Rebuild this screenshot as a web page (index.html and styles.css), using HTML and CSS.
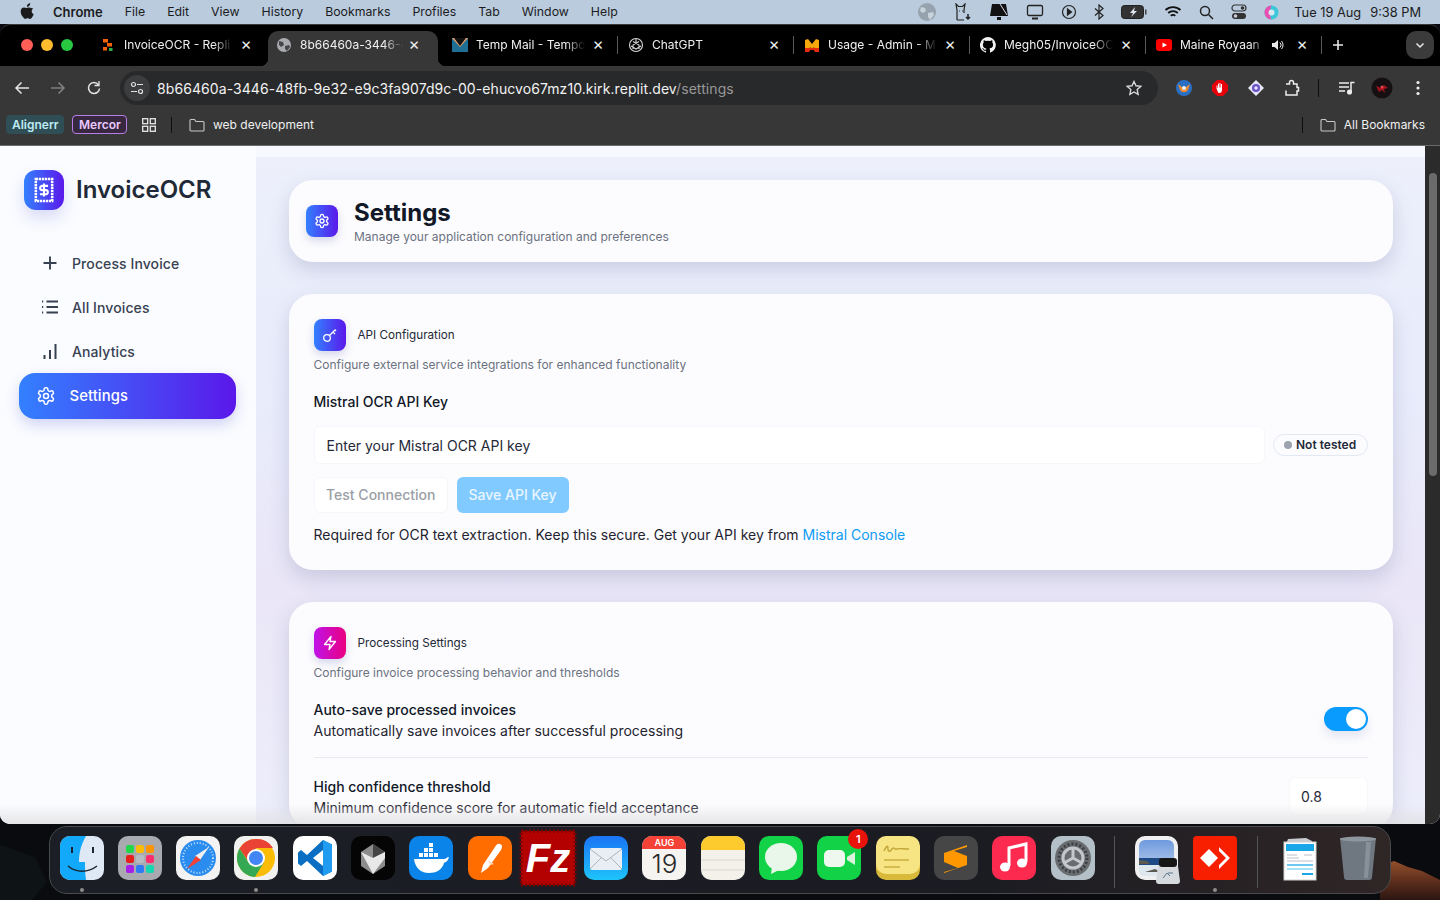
FILE: index.html
```html
<!DOCTYPE html>
<html lang="en">
<head>
    <meta charset="UTF-8">
    <meta name="viewport" content="width=device-width, initial-scale=1.0">
    <title>Settings - InvoiceOCR</title>
    <link rel="stylesheet" href="styles.css">
</head>
<body>
<div class="desktop">
    <svg class="wallpaper" width="1440" height="900" viewBox="0 0 1440 900">
        <defs><linearGradient id="rockg" x1="0" y1="0" x2="0" y2="1"><stop offset="0" stop-color="#93502b"/><stop offset=".5" stop-color="#5e2f1c"/><stop offset="1" stop-color="#2c1611"/></linearGradient></defs>
        <path d="M1380 866l14-5 14 6 14 4 18 9v20h-60z" fill="url(#rockg)"/>
        <path d="M0 845l35 12 12 25-15 18H0z" fill="#0e1315"/>
    </svg>

    <!-- barra de menu -->
    <header class="menubar">
        <svg class="apple" width="14" height="16" viewBox="0 0 14 16"><path d="M10.2 0c.1 1.100-.3 2-.9 2.700-.6.700-1.500 1.200-2.400 1.100-.1-1 .4-2 .9-2.600C8.400.6 9.400.1 10.200 0zM13.300 5.500c-1 .7-1.600 1.600-1.600 2.800 0 1.400.8 2.400 2 2.900-.4 1.100-.9 2.100-1.600 3-.6.900-1.300 1.700-2.200 1.700-.9 0-1.200-.6-2.300-.6-1.100 0-1.500.6-2.300.6-.9 0-1.600-.9-2.300-1.800C1.800 12.800.7 10.500.7 8.400c0-2.400 1.500-3.900 3.300-3.900.9 0 1.700.6 2.400.6.600 0 1.500-.7 2.700-.7 1.500.1 3 .9 4.200 1.100z" fill="#1b1b1b"/></svg>
        <nav class="menu-items">
            <b>Chrome</b><span>File</span><span>Edit</span><span>View</span><span>History</span><span>Bookmarks</span><span>Profiles</span><span>Tab</span><span>Window</span><span>Help</span>
        </nav>
        <div class="status-items">
            <svg width="20" height="20" viewBox="0 0 20 20"><circle cx="10" cy="10" r="9" fill="#96a3ae"/><path d="M4 5l4 1 1 3-3 2-3-2zM11 11l5-1 1 3-4 5-2-3z" fill="#c8d3dc"/></svg>
            <svg width="18" height="18" viewBox="0 0 18 18" fill="none" stroke="#222" stroke-width="1.200"><path d="M3 17V7L2 1l2.500 2.500h4L11 1l-1 6v3"/><path d="M3 17h7M5 8h.8M8 8h.8"/><path d="M14 11v5M12 14l2 2 2-2" stroke-width="1.500"/></svg>
            <svg width="20" height="18" viewBox="0 0 20 18"><path d="M3 1h14l2 12H1z" fill="#111"/><path d="M11 1l7 11" stroke="#dde" stroke-width="1"/><rect x="8" y="14" width="4" height="3" fill="#111"/></svg>
            <svg width="18" height="16" viewBox="0 0 18 16" fill="none" stroke="#222" stroke-width="1.300"><rect x="1.500" y="1.500" width="15" height="10" rx="1.500"/><path d="M6 14.500h6" stroke-width="2"/></svg>
            <svg width="16" height="16" viewBox="0 0 16 16" fill="none" stroke="#222" stroke-width="1.200"><circle cx="8" cy="8" r="6.500"/><path d="M6.500 5l4 3-4 3z" fill="#222"/></svg>
            <svg width="10" height="16" viewBox="0 0 10 16" fill="none" stroke="#222" stroke-width="1.200"><path d="M1 4.500l8 7L5 15V1l4 3.500-8 7"/></svg>
            <svg width="26" height="14" viewBox="0 0 26 14"><rect x=".5" y=".5" width="22" height="13" rx="3" fill="#333" stroke="#222"/><path d="M14 2l-5 6h3l-2 4 6-6h-3z" fill="#dfe6ee"/><rect x="24" y="4.500" width="1.500" height="5" fill="#444"/></svg>
            <svg width="18" height="14" viewBox="0 0 18 14" fill="none" stroke="#111" stroke-width="1.800"><path d="M1.500 5a11 11 0 0115 0M4.200 8a7 7 0 019.600 0M6.800 10.800a3 3 0 014.400 0"/></svg>
            <svg width="15" height="15" viewBox="0 0 15 15" fill="none" stroke="#222" stroke-width="1.500"><circle cx="6" cy="6" r="4.500"/><path d="M9.500 9.500L14 14"/></svg>
            <svg width="16" height="16" viewBox="0 0 16 16"><rect x="1" y="1" width="14" height="6" rx="3" fill="none" stroke="#333" stroke-width="1.200"/><circle cx="11.500" cy="4" r="1.800" fill="#333"/><rect x="1" y="9" width="14" height="6" rx="3" fill="#333"/><circle cx="4.500" cy="12" r="1.800" fill="#ccd"/></svg>
            <svg width="15" height="15" viewBox="0 0 15 15"><circle cx="7.500" cy="7.500" r="7" fill="#3cc8d8"/><path d="M7.500.5a7 7 0 000 14c-2-3-2-10 0-14z" fill="#e84fb0"/><circle cx="7.500" cy="7.500" r="3" fill="#dbe8f2"/></svg>
            <div class="clock"><span>Tue 19 Aug</span><span>9:38 PM</span></div>
        </div>
    </header>

    <!-- ventana del navegador -->
    <div class="window">
        <div class="tabstrip">
            <div class="traffic">
                <i class="red"></i><i class="yellow"></i><i class="green"></i>
            </div>
            <div class="tab">
                <svg class="favicon" viewBox="0 0 16 16"><rect x="3" y="2" width="5" height="3.500" fill="#f26207"/><rect x="7" y="6" width="5" height="3.500" fill="#f26207"/><rect x="3" y="10" width="4" height="3.500" fill="#f26207"/><rect x="9" y="11" width="3.500" height="3" fill="#2bb24c"/></svg>
                <span class="tab-title">InvoiceOCR - Repli</span><span class="tab-close">×</span>
            </div>
            <div class="tab active">
                <svg class="favicon" viewBox="0 0 16 16"><circle cx="8" cy="8" r="7" fill="#a9abae"/><path d="M3 4l4 1 1 3-3 2-2-2zM9 9l4-1 1 2-3 4-2-2z" fill="#454648"/></svg>
                <span class="tab-title short">8b66460a-3446-4</span><span class="tab-close">×</span>
            </div>
            <div class="tab">
                <svg class="favicon" viewBox="0 0 16 16"><rect y="1" width="16" height="14" fill="#1e6f93"/><path d="M0 1h16L8 10z" fill="#f5a66b"/><path d="M2 1l6 8 6-8z" fill="#111"/></svg>
                <span class="tab-title">Temp Mail - Tempo</span><span class="tab-close">×</span>
            </div>
            <div class="tab sep">
                <svg class="favicon" viewBox="0 0 16 16" fill="none" stroke="#d8d8d8" stroke-width="1.100"><circle cx="8" cy="8" r="6.500"/><path d="M5 4.500l6 3.500v4M11 4.500L5 8v4M3 9l5 3 5-3M8 2v4"/></svg>
                <span class="tab-title">ChatGPT</span><span class="tab-close">×</span>
            </div>
            <div class="tab sep">
                <svg class="favicon" viewBox="0 0 16 16"><path d="M1 15V3l3-1 4 5 4-5 3 1v12h-4l-1-5-2 3-2-3-1 5z" fill="#f5a70b"/><path d="M1 15v-4h14v4h-4l-1-2H6l-1 2z" fill="#e32b10"/></svg>
                <span class="tab-title">Usage - Admin - M</span><span class="tab-close">×</span>
            </div>
            <div class="tab sep">
                <svg class="favicon" viewBox="0 0 16 16"><path d="M8 0a8 8 0 00-2.500 15.600c.4.100.5-.2.500-.4v-1.400c-2.200.500-2.700-1-2.700-1-.4-.9-.9-1.200-.9-1.200-.7-.5.100-.5.100-.5.800.1 1.200.8 1.200.8.700 1.200 1.900.9 2.300.7.100-.5.300-.9.500-1.100-1.800-.2-3.600-.9-3.600-4 0-.9.300-1.600.8-2.100-.1-.2-.4-1 .1-2.100 0 0 .7-.2 2.200.8a7.600 7.600 0 014 0c1.500-1 2.200-.8 2.200-.8.400 1.100.2 1.900.1 2.100.5.600.8 1.300.8 2.100 0 3.100-1.900 3.700-3.700 3.900.3.300.6.800.6 1.500v2.200c0 .2.100.5.600.4A8 8 0 008 0z" fill="#f2f2f2"/></svg>
                <span class="tab-title">Megh05/InvoiceOC</span><span class="tab-close">×</span>
            </div>
            <div class="tab sep">
                <svg class="favicon" viewBox="0 0 16 16"><rect y="2" width="16" height="12" rx="3" fill="#f00"/><path d="M6.500 5.500L11 8l-4.500 2.500z" fill="#fff"/></svg>
                <span class="tab-title audio">Maine Royaan</span>
                <svg class="speaker" width="14" height="14" viewBox="0 0 14 14"><path d="M1 5h2.500L7 2v10L3.500 9H1z" fill="#e8e8e8"/><path d="M9 4.500a3.500 3.500 0 010 5M10.500 3a6 6 0 010 8" stroke="#e8e8e8" fill="none"/></svg>
                <span class="tab-close">×</span>
            </div>
            <div class="tab sep new-tab">
                <svg width="12" height="12" viewBox="0 0 12 12" stroke="#e8e8e8" stroke-width="1.600"><path d="M6 1v10M1 6h10"/></svg>
            </div>
            <div class="tab-search">
                <svg width="10" height="10" viewBox="0 0 10 10" fill="none" stroke="#e8e8e8" stroke-width="1.500"><path d="M1.500 3.500L5 7l3.500-3.500"/></svg>
            </div>
        </div>

        <div class="toolbar">
            <div class="nav-buttons">
                <svg width="16" height="16" viewBox="0 0 16 16" fill="none" stroke="#e3e3e3" stroke-width="1.500"><path d="M15 8H2M7.500 2.500L2 8l5.500 5.500"/></svg>
                <svg width="16" height="16" viewBox="0 0 16 16" fill="none" stroke="#808080" stroke-width="1.500"><path d="M1 8h13M8.500 2.500L14 8l-5.500 5.500"/></svg>
                <svg width="16" height="16" viewBox="0 0 16 16" fill="none" stroke="#e3e3e3" stroke-width="1.500"><path d="M13.500 8.500A5.500 5.500 0 118 2.500c2 0 3.500 1 4.500 2.500"/><path d="M13 1v4.500H8.500" stroke-width="1.300"/></svg>
            </div>
            <div class="omnibox">
                <span class="site-info">
                    <svg width="14" height="14" viewBox="0 0 14 14" fill="none" stroke="#e3e3e3" stroke-width="1.200"><circle cx="3.500" cy="3.500" r="2"/><path d="M7 3.500h6M1 10.500h6"/><circle cx="10.500" cy="10.500" r="2"/></svg>
                </span>
                <span class="url">8b66460a-3446-48fb-9e32-e9c3fa907d9c-00-ehucvo67mz10.kirk.replit.dev<em>/settings</em></span>
                <svg class="star" width="16" height="16" viewBox="0 0 16 16" fill="none" stroke="#d8d8d8" stroke-width="1.400"><path d="M8 1.500l2 4.300 4.700.6-3.500 3.200.9 4.700L8 12l-4.100 2.300.9-4.700-3.500-3.200L6 5.800z"/></svg>
            </div>
            <div class="extensions">
                <svg width="18" height="18" viewBox="0 0 18 18"><circle cx="9" cy="9" r="8" fill="#2a6fc4"/><path d="M3 5l4 3h4l4-3-2 6-2 2H7l-2-2z" fill="#f08a2c"/><circle cx="9" cy="9" r="2" fill="#e6eef8"/></svg>
                <svg width="18" height="18" viewBox="0 0 18 18"><path d="M6 1h6l5 5v6l-5 5H6l-5-5V6z" fill="#e8000b"/><path d="M5.500 9.500V6.500h1V9h.5V4.500h1V8.500h.5V4h1v4.500h.5V5h1v6c0 2-1 3-2.500 3S7 13 6.500 12z" fill="#fff"/></svg>
                <svg width="18" height="18" viewBox="0 0 18 18"><path d="M9 1l8 8-8 8-8-8z" fill="#e6e6f5"/><circle cx="9" cy="9" r="4" fill="#6a4fc8"/><circle cx="9" cy="9" r="1.800" fill="#e6e6f5"/></svg>
                <svg width="18" height="18" viewBox="0 0 18 18" fill="none" stroke="#eee" stroke-width="1.500"><path d="M3 5h3.500V3.500a2 2 0 014 0V5H14v3.500h1.500v3.500H14v4H3v-4.500"/></svg>
                <i class="bar-sep"></i>
                <svg width="18" height="16" viewBox="0 0 18 16" fill="none" stroke="#eee" stroke-width="1.500"><path d="M1 3h10M1 7h10M1 11h6M13 12V2.500h3.500"/><circle cx="11.500" cy="12" r="1.800" fill="#eee"/></svg>
                <svg class="avatar" width="22" height="22" viewBox="0 0 22 22"><circle cx="11" cy="11" r="10.500" fill="#161013"/><path d="M5 9l5 2 3-3 4 3-4 1 1 4-3-3-3 2z" fill="#a3121d"/><circle cx="11" cy="10" r="1.500" fill="#e5484d"/></svg>
                <svg class="more" width="4" height="16" viewBox="0 0 4 16" fill="#eee"><circle cx="2" cy="2.500" r="1.600"/><circle cx="2" cy="8" r="1.600"/><circle cx="2" cy="13.500" r="1.600"/></svg>
            </div>
        </div>

        <div class="bookmarks">
            <span class="chip chip-aligner">Alignerr</span>
            <span class="chip chip-mercor">Mercor</span>
            <svg class="apps" width="14" height="14" viewBox="0 0 14 14" fill="none" stroke="#e8e8e8" stroke-width="1.300"><rect x=".7" y=".7" width="5" height="5"/><rect x="8.300" y=".7" width="5" height="5"/><rect x=".7" y="8.300" width="5" height="5"/><rect x="8.300" y="8.300" width="5" height="5"/></svg>
            <i class="bm-sep"></i>
            <svg width="16" height="14" viewBox="0 0 16 14" fill="none" stroke="#c8c8c8" stroke-width="1.100"><path d="M1 2.500a1 1 0 011-1h3.500l1.500 2h7a1 1 0 011 1v7.500a1 1 0 01-1 1H2a1 1 0 01-1-1z"/></svg>
            <span class="bm-label">web development</span>
            <i class="bm-sep right"></i>
            <svg width="16" height="14" viewBox="0 0 16 14" fill="none" stroke="#c8c8c8" stroke-width="1.100"><path d="M1 2.500a1 1 0 011-1h3.500l1.500 2h7a1 1 0 011 1v7.500a1 1 0 01-1 1H2a1 1 0 01-1-1z"/></svg>
            <span class="bm-label">All Bookmarks</span>
        </div>

        <!-- contenido de la pagina -->
        <div class="page">
            <aside class="sidebar">
                <div class="brand">
                    <span class="brand-icon">
                        <svg width="28" height="28" viewBox="0 0 24 24" fill="none" stroke="#fff" stroke-width="2.200"><path d="M5 2.500h14v19H5z" stroke-dasharray="2 .6"/><path d="M15.500 8.500H10.500a1.800 1.800 0 000 3.600h3a1.800 1.800 0 010 3.600H8.500M12 6.500v11" stroke-width="1.800"/></svg>
                    </span>
                    <span class="brand-name">InvoiceOCR</span>
                </div>
                <nav class="side-nav">
                    <a class="nav-item" href="#">
                        <svg width="20" height="20" viewBox="0 0 20 20" fill="none" stroke="#374151" stroke-width="1.900"><path d="M10 3.500v13M3.500 10h13"/></svg>
                        Process Invoice
                    </a>
                    <a class="nav-item" href="#">
                        <svg width="20" height="20" viewBox="0 0 20 20" fill="none" stroke="#374151" stroke-width="1.900"><path d="M6.500 4.500H18M6.500 10H18M6.500 15.500H18M2 4.500h1.200M2 10h1.200M2 15.500h1.200"/></svg>
                        All Invoices
                    </a>
                    <a class="nav-item" href="#">
                        <svg width="20" height="20" viewBox="0 0 20 20" fill="none" stroke="#374151" stroke-width="2"><path d="M4.500 18v-4M10 18V9M15.500 18V3"/></svg>
                        Analytics
                    </a>
                    <a class="nav-item active" href="#">
                        <svg width="20" height="20" viewBox="0 0 24 24" fill="none" stroke="#fff" stroke-width="1.800"><path d="M12.200 2h-.4a2 2 0 00-2 2v.2a2 2 0 01-1 1.700l-.4.300a2 2 0 01-2 0l-.200-.1a2 2 0 00-2.700.7l-.2.400a2 2 0 00.7 2.700l.2.100a2 2 0 011 1.700v.5a2 2 0 01-1 1.700l-.2.100a2 2 0 00-.7 2.700l.2.400a2 2 0 002.700.7l.2-.1a2 2 0 012 0l.4.300a2 2 0 011 1.700v.2a2 2 0 002 2h.4a2 2 0 002-2v-.2a2 2 0 011-1.700l.4-.3a2 2 0 012 0l.2.100a2 2 0 002.700-.7l.2-.4a2 2 0 00-.7-2.700l-.2-.1a2 2 0 01-1-1.700v-.5a2 2 0 011-1.700l.2-.1a2 2 0 00.7-2.700l-.2-.4a2 2 0 00-2.700-.7l-.2.100a2 2 0 01-2 0l-.4-.3a2 2 0 01-1-1.700V4a2 2 0 00-2-2z"/><circle cx="12" cy="12" r="3"/></svg>
                        Settings
                    </a>
                </nav>
            </aside>

            <main class="main">
                <section class="card page-header">
                    <span class="icon-box blue">
                        <svg width="16" height="16" viewBox="0 0 24 24" fill="none" stroke="#fff" stroke-width="2"><path d="M12.200 2h-.4a2 2 0 00-2 2v.2a2 2 0 01-1 1.700l-.4.300a2 2 0 01-2 0l-.200-.1a2 2 0 00-2.700.7l-.2.400a2 2 0 00.7 2.700l.2.100a2 2 0 011 1.700v.5a2 2 0 01-1 1.700l-.2.100a2 2 0 00-.7 2.700l.2.400a2 2 0 002.700.7l.2-.1a2 2 0 012 0l.4.300a2 2 0 011 1.700v.2a2 2 0 002 2h.4a2 2 0 002-2v-.2a2 2 0 011-1.700l.4-.3a2 2 0 012 0l.2.100a2 2 0 002.700-.7l.2-.4a2 2 0 00-.7-2.700l-.2-.1a2 2 0 01-1-1.700v-.5a2 2 0 011-1.700l.2-.1a2 2 0 00.7-2.700l-.2-.4a2 2 0 00-2.700-.7l-.2.100a2 2 0 01-2 0l-.4-.3a2 2 0 01-1-1.700V4a2 2 0 00-2-2z"/><circle cx="12" cy="12" r="3"/></svg>
                    </span>
                    <div>
                        <h1>Settings</h1>
                        <p class="page-sub">Manage your application configuration and preferences</p>
                    </div>
                </section>

                <section class="card settings-card">
                    <div class="card-head">
                        <span class="icon-box blue">
                            <svg width="16" height="16" viewBox="0 0 16 16" fill="none" stroke="#fff" stroke-width="1.300"><circle cx="5" cy="11" r="3.300"/><path d="M7.500 8.500l6-6M11 5l2 2M13 3l1 1"/></svg>
                        </span>
                        <h2>API Configuration</h2>
                    </div>
                    <p class="card-sub">Configure external service integrations for enhanced functionality</p>
                    <label class="field-label">Mistral OCR API Key</label>
                    <div class="key-row">
                        <div class="text-input">Enter your Mistral OCR API key</div>
                        <span class="status-badge"><i></i>Not tested</span>
                    </div>
                    <div class="btn-row">
                        <button class="btn btn-ghost" type="button">Test Connection</button>
                        <button class="btn btn-save" type="button">Save API Key</button>
                    </div>
                    <p class="help">Required for OCR text extraction. Keep this secure. Get your API key from <a href="#">Mistral Console</a></p>
                </section>

                <section class="card settings-card">
                    <div class="card-head">
                        <span class="icon-box pink">
                            <svg width="16" height="16" viewBox="0 0 16 16" fill="none" stroke="#fff" stroke-width="1.300" stroke-linejoin="round"><path d="M9 1.500L2.500 9.500H8l-1 5 6.500-8H8z"/></svg>
                        </span>
                        <h2>Processing Settings</h2>
                    </div>
                    <p class="card-sub">Configure invoice processing behavior and thresholds</p>
                    <div class="setting-row first">
                        <div>
                            <div class="setting-name">Auto-save processed invoices</div>
                            <div class="setting-desc">Automatically save invoices after successful processing</div>
                        </div>
                        <span class="toggle"><i></i></span>
                    </div>
                    <div class="setting-row">
                        <div>
                            <div class="setting-name">High confidence threshold</div>
                            <div class="setting-desc">Minimum confidence score for automatic field acceptance</div>
                        </div>
                        <div class="number-input">0.8</div>
                    </div>
                </section>
            </main>

            <div class="scrollbar"><i></i></div>
            <div class="bottom-fade"></div>
        </div>
    </div>

    <!-- dock -->
    <footer class="dock">
        <span class="app dot">
            <svg viewBox="0 0 44 44"><rect width="44" height="44" rx="10" fill="#dfe9f6"/><path d="M10 0h16c-4 7-7 15-7 26h6c0 6 0 12 1 18H10A10 10 0 010 34V10A10 10 0 0110 0z" fill="#12a9fb"/><path d="M8 30c8 7 20 7 29 0" fill="none" stroke="#1b2430" stroke-width="1.500"/><path d="M12 11v6M33 11v6" stroke="#1b2430" stroke-width="2"/></svg>
        </span>
        <span class="app">
            <svg viewBox="0 0 44 44"><rect width="44" height="44" rx="10" fill="#a8aab0"/><rect x="8" y="9" width="8" height="8" rx="2" fill="#22d84a"/><rect x="18" y="9" width="8" height="8" rx="2" fill="#fbbc05"/><rect x="28" y="9" width="8" height="8" rx="2" fill="#ff9500"/><rect x="8" y="19" width="8" height="8" rx="2" fill="#e8201c"/><rect x="18" y="19" width="8" height="8" rx="2" fill="#b5bcc2"/><rect x="28" y="19" width="8" height="8" rx="2" fill="#ff2d6b"/><rect x="8" y="29" width="8" height="8" rx="2" fill="#a820e8"/><rect x="18" y="29" width="8" height="8" rx="2" fill="#2d7bf5"/><rect x="28" y="29" width="8" height="8" rx="2" fill="#14d6b0"/></svg>
        </span>
        <span class="app">
            <svg viewBox="0 0 44 44"><rect width="44" height="44" rx="10" fill="#f3f3f3"/><circle cx="22" cy="22" r="18" fill="#2b8cf0"/><circle cx="22" cy="22" r="15" fill="none" stroke="#bfe0ff" stroke-dasharray="1 2" stroke-width="2"/><path d="M33 11L19 20l5 4z" fill="#f0f0f0"/><path d="M11 33l14-9-5-4z" fill="#ef4136"/></svg>
        </span>
        <span class="app dot">
            <svg viewBox="0 0 44 44"><rect width="44" height="44" rx="10" fill="#f1f1ef"/><circle cx="22" cy="22" r="19" fill="#fbbc05"/><path d="M22 12h17a19 19 0 00-17-9 19 19 0 00-16.500 9.500L15 26z" fill="#ea4335"/><path d="M5.500 12.500A19 19 0 0021 41l9-15-15 1z" fill="#34a853"/><circle cx="22" cy="22" r="9" fill="#fff"/><circle cx="22" cy="22" r="7" fill="#4285f4"/></svg>
        </span>
        <span class="app">
            <svg viewBox="0 0 44 44"><rect width="44" height="44" rx="10" fill="#fff"/><path d="M30 4l9 4.500v27L30 40 14 25l-6 5-3-2.500v-11L8 14l6 5z" fill="#0a6fc2"/><path d="M30 4l9 4.500v27L30 40z" fill="#1f9cf0"/><path d="M30 14l-10 8 10 8z" fill="#fff"/></svg>
        </span>
        <span class="app">
            <svg viewBox="0 0 44 44"><rect width="44" height="44" rx="10" fill="#050505"/><path d="M22 8l12 8v14l-12 8-12-8V16z" fill="#8c8c8c"/><path d="M22 8l12 8-12 6z" fill="#444"/><path d="M10 16l12 6 12-6v6L22 38z" fill="#e8e8e8"/></svg>
        </span>
        <span class="app">
            <svg viewBox="0 0 44 44"><rect width="44" height="44" rx="10" fill="#0b84ea"/><path d="M5 23h30c2 0 3-2 5-2-1 4-3 5-5 6-2 7-8 10-15 10C11 37 6 31 5 23z" fill="#fff"/><path d="M10 17h4v4h-4zM15 17h4v4h-4zM20 17h4v4h-4zM15 12h4v4h-4zM20 12h4v4h-4zM20 7h4v4h-4zM25 17h4v4h-4z" fill="#fff"/></svg>
        </span>
        <span class="app">
            <svg viewBox="0 0 44 44"><rect width="44" height="44" rx="10" fill="#ff6c00"/><path d="M32 8c3 1 2 4 1 6L20 32l-7 5 2-8L27 11c1-2 3-4 5-3z" fill="#fff"/><path d="M20 24l6 4-4 1z" fill="#ffd8bd"/></svg>
        </span>
        <span class="app">
            <svg viewBox="0 0 44 44" class="filezilla"><rect x="-5" y="-5" width="54" height="54" fill="#b30000"/><rect x="-5" y="-5" width="54" height="54" fill="none" stroke="#7e0000" stroke-width="3" stroke-dasharray="2 2"/><text x="22" y="36" class="fz-text">Fz</text></svg>
        </span>
        <span class="app">
            <svg viewBox="0 0 44 44"><defs><linearGradient id="mailg" x1="0" y1="0" x2="0" y2="1"><stop offset="0" stop-color="#1a74f5"/><stop offset="1" stop-color="#1ec4fb"/></linearGradient></defs><rect width="44" height="44" rx="10" fill="url(#mailg)"/><rect x="6" y="12" width="32" height="22" rx="2" fill="#e8eef4"/><path d="M6 13l16 12 16-12M6 33l12-12M38 33L26 21" fill="none" stroke="#a9b4c0"/></svg>
        </span>
        <span class="app calendar">
            <span class="cal-month">AUG</span>
            <span class="cal-day">19</span>
        </span>
        <span class="app">
            <svg viewBox="0 0 44 44"><rect width="44" height="44" rx="10" fill="#f3f1ea"/><path d="M0 14V10A10 10 0 0110 0h24a10 10 0 0110 10v4z" fill="#fdcb2e"/><path d="M0 24h44M0 34h44" stroke="#d9d6cd"/></svg>
        </span>
        <span class="app">
            <svg viewBox="0 0 44 44"><rect width="44" height="44" rx="10" fill="#12d347"/><ellipse cx="22" cy="21" rx="16" ry="14" fill="#e9f7ea"/><path d="M13 31l-1 7 8-4z" fill="#e9f7ea"/></svg>
        </span>
        <span class="app has-badge">
            <svg viewBox="0 0 44 44"><rect width="44" height="44" rx="10" fill="#12d347"/><rect x="7" y="14" width="21" height="17" rx="5" fill="#eef8ee"/><path d="M30 21l8-5v13l-8-5z" fill="#d9f2dc"/></svg>
            <span class="badge">1</span>
        </span>
        <span class="app">
            <svg viewBox="0 0 44 44"><rect y="3" width="44" height="41" rx="10" fill="#d9b93a"/><rect width="44" height="38" rx="10" fill="#f7e583"/><path d="M8 15c3-6 4-6 4-2 0 3 2 3 4 0s2 1 5 0 6 0 12 0" fill="none" stroke="#c2a63a" stroke-width="1.400"/><path d="M8 24h25M8 31h16" stroke="#d4bb52" stroke-width="2"/></svg>
        </span>
        <span class="app">
            <svg viewBox="0 0 44 44"><rect width="44" height="44" rx="10" fill="#464646"/><path d="M33 9L10 17v9l14 6-14 4v1l23-8v-9L20 15l13-4z" fill="#ff9800"/></svg>
        </span>
        <span class="app">
            <svg viewBox="0 0 44 44"><rect width="44" height="44" rx="10" fill="#fb2a4e"/><path d="M17 30V12l17-4v18" fill="none" stroke="#fff" stroke-width="3"/><ellipse cx="13" cy="31" rx="5" ry="4.500" fill="#fff"/><ellipse cx="30" cy="27" rx="5" ry="4.500" fill="#fff"/></svg>
        </span>
        <span class="app">
            <svg viewBox="0 0 44 44"><rect width="44" height="44" rx="10" fill="#b4c0c8"/><circle cx="22" cy="22" r="18" fill="#6a6d70"/><circle cx="22" cy="22" r="14" fill="none" stroke="#3d3f42" stroke-width="3" stroke-dasharray="2 2"/><circle cx="22" cy="22" r="10" fill="none" stroke="#c4c8cc" stroke-width="3"/><path d="M22 22v-10M22 22l9 5M22 22l-9 5" stroke="#c4c8cc" stroke-width="3"/></svg>
        </span>
        <i class="dock-sep"></i>
        <span class="app">
            <svg viewBox="0 0 44 44"><defs><linearGradient id="skyg" x1="0" y1="0" x2="0" y2="1"><stop offset="0" stop-color="#6f9ade"/><stop offset="1" stop-color="#c8d8ee"/></linearGradient></defs><rect width="43" height="44" rx="10" fill="#f0f0f0"/><rect x="4" y="4" width="35" height="36" rx="6" fill="url(#skyg)"/><rect x="4" y="22" width="35" height="7" fill="#1e4a86"/><path d="M4 29h35v5a6 6 0 01-6 6H10a6 6 0 01-6-6z" fill="#dfe8ee"/><path d="M4 24l8 1 3 3H4zM10 36l10-3 6 3z" fill="#5c5a50"/><path d="M23 30h20l2 15a3 3 0 01-3 3H24a3 3 0 01-3-3z" fill="#d6dade"/><rect x="24" y="22" width="18" height="9" rx="3" fill="#161616"/><path d="M28 42l4-5 3 3M33 37h5" stroke="#5f7890" fill="none"/></svg>
        </span>
        <span class="app dot">
            <svg viewBox="0 0 44 44"><rect width="44" height="44" rx="4" fill="#f81e00"/><path d="M16 13l9 9-9 9-9-9z" fill="#fff"/><path d="M26 11l11 11-11 11 0-4 7-7-7-7z" fill="#fff"/></svg>
        </span>
        <i class="dock-sep"></i>
        <span class="app">
            <svg viewBox="0 0 44 44"><path d="M10 3l18-1 6 3v3H8z" fill="#c8ccd0"/><rect x="6" y="6" width="32" height="38" fill="#fff" stroke="#d0d0d0"/><rect x="8" y="8" width="28" height="7" fill="#1aa7e8"/><path d="M9 19h10M26 19h8M9 22h12M9 25h26" stroke="#b8c0c8"/><rect x="9" y="28" width="26" height="2" fill="#6cc8f0"/><rect x="9" y="32" width="26" height="2" fill="#a8e0f5"/><rect x="24" y="37" width="11" height="2" fill="#1aa7e8"/></svg>
        </span>
        <span class="app">
            <svg viewBox="0 0 44 44"><path d="M4 2h36l-4 39a3 3 0 01-3 3H11a3 3 0 01-3-3z" fill="#6f7880"/><ellipse cx="22" cy="3" rx="18" ry="2.500" fill="#8f979e"/><path d="M30 6l-2 36h4l3-36z" fill="#88919a"/></svg>
        </span>
    </footer>
</div>
</body>
</html>
```

FILE: styles.css
```css
* {
    box-sizing: border-box;
}
html, body {
    margin: 0;
    height: 100%;
}
body {
    font-family: Inter, "Noto Sans", sans-serif;
    overflow: hidden;
}
i {
    display: block;
}
svg {
    flex: none;
    display: block;
}

.desktop {
    position: relative;
    width: 1440px;
    height: 900px;
    overflow: hidden;
    background: #0a0b0f;
}
.wallpaper {
    position: absolute;
    left: 0;
    top: 0;
}

/* barra de menu */
.menubar {
    height: 24px;
    background: #b9cbdc;
    display: flex;
    align-items: center;
    padding-left: 20px;
    font-size: 12.300px;
    color: #1c1c1e;
    position: relative;
}
.apple {
    margin-top: -2px;
}
.menu-items {
    display: flex;
    gap: 22px;
    margin-left: 19px;
}
.menu-items b {
    font-weight: 600;
    font-size: 13px;
}
.status-items {
    margin-left: auto;
    display: flex;
    align-items: center;
    gap: 17px;
    padding-right: 19px;
}
.clock {
    display: flex;
    gap: 9px;
    font-size: 12.800px;
    margin-left: -2px;
}

/* ventana */
.window {
    height: 800px;
    background: #000;
    border-radius: 10px;
    overflow: hidden;
    position: relative;
    display: flex;
    flex-direction: column;
    border-top: 1px solid #3a3a3a;
}
.tabstrip {
    height: 41px;
    flex: none;
    display: flex;
    align-items: flex-end;
    position: relative;
    color: #f0f0f0;
    font-size: 12px;
}
.traffic {
    width: 89px;
    height: 35px;
    padding: 0 0 8px 21px;
    display: flex;
    align-items: center;
    gap: 8px;
}
.traffic i {
    width: 12px;
    height: 12px;
    border-radius: 50%;
}
.traffic .red { background: #ff5f57; }
.traffic .yellow { background: #febc2e; }
.traffic .green { background: #28c840; }
.tab {
    width: 176px;
    height: 35px;
    padding: 0 0 8px 11px;
    display: flex;
    align-items: center;
    position: relative;
}
.tab.active {
    background: #373737;
    border-radius: 10px 10px 0 0;
    margin: 0 3px;
    width: 170px;
    padding-left: 8px;
}
.tab.active::before,
.tab.active::after {
    content: "";
    position: absolute;
    bottom: 0;
    width: 8px;
    height: 8px;
}
.tab.active::before {
    left: -8px;
    background: radial-gradient(circle at 0 0, transparent 8px, #373737 8.500px);
}
.tab.active::after {
    right: -8px;
    background: radial-gradient(circle at 100% 0, transparent 8px, #373737 8.500px);
}
.tab.sep::before {
    content: "";
    position: absolute;
    left: 0;
    top: 5px;
    height: 18px;
    width: 1px;
    background: #5a5a5a;
}
.favicon {
    width: 16px;
    height: 16px;
    margin-right: 8px;
}
.tab-title {
    width: 109px;
    white-space: nowrap;
    overflow: hidden;
    -webkit-mask-image: linear-gradient(90deg, #000 82%, transparent 100%);
    mask-image: linear-gradient(90deg, #000 82%, transparent 100%);
}
.tab-title.short {
    width: 110px;
    -webkit-mask-image: linear-gradient(90deg, #000 76%, transparent 94%);
    mask-image: linear-gradient(90deg, #000 76%, transparent 94%);
}
.tab-title.audio {
    width: 86px;
}
.speaker {
    margin: 0 6px 0 5px;
}
.tab-close {
    font-size: 17px;
    line-height: 1;
    width: 14px;
    text-align: center;
    margin-left: 6px;
    color: #eee;
}
.tab.active .tab-close {
    margin-left: -3px;
}
.tab .speaker + .tab-close {
    margin-left: 4px;
}
.tab.new-tab {
    width: 40px;
    padding-left: 11px;
}
.tab-search {
    position: absolute;
    left: 1406px;
    top: 6px;
    width: 28px;
    height: 28px;
    border-radius: 10px;
    background: #3b3b3b;
    display: flex;
    align-items: center;
    justify-content: center;
}

.toolbar {
    height: 44px;
    flex: none;
    background: #373737;
    display: flex;
    align-items: center;
    padding: 0 14px;
}
.nav-buttons {
    display: flex;
    gap: 20px;
    width: 106px;
}
.omnibox {
    width: 1038px;
    height: 34px;
    border-radius: 17px;
    background: #28292b;
    display: flex;
    align-items: center;
    padding: 0 16px 0 4px;
}
.site-info {
    width: 26px;
    height: 26px;
    border-radius: 50%;
    background: #3c3d3f;
    display: flex;
    align-items: center;
    justify-content: center;
}
.url {
    margin-left: 7px;
    font-size: 14px;
    letter-spacing: .08px;
    color: #f2f2f2;
    white-space: nowrap;
}
.url em {
    font-style: normal;
    color: #989898;
}
.star {
    margin-left: auto;
}
.extensions {
    display: flex;
    align-items: center;
    margin-left: 17px;
    gap: 18px;
    flex: 1;
}
.bar-sep {
    width: 1px;
    height: 18px;
    background: #0e0e0e;
    margin: 0 1px 0 -1px;
}
.avatar {
    margin-left: -3px;
}
.more {
    margin-left: 5px;
}

.bookmarks {
    height: 36px;
    flex: none;
    background: #373737;
    border-bottom: 1px solid #6a6a6a;
    display: flex;
    align-items: center;
    padding: 0 15px 6px 6px;
    font-size: 12px;
    color: #f0f0f0;
}
.chip {
    height: 19px;
    border-radius: 4px;
    font-weight: 600;
    display: flex;
    align-items: center;
    padding: 0 6px;
}
.chip-aligner {
    background: #2f4e55;
    color: #bdeaf2;
    width: 58px;
    margin-right: 8px;
}
.chip-mercor {
    background: #38283f;
    color: #e9c9ff;
    border: 1px solid #b67ee6;
    width: 55px;
}
.apps {
    margin-left: 15px;
}
.bm-sep {
    width: 1px;
    height: 16px;
    background: #0e0e0e;
    margin: 0 17px 0 15px;
}
.bm-sep.right {
    margin-left: auto;
    margin-right: 17px;
}
.bm-label {
    margin-left: 8px;
}

/* pagina */
.page {
    flex: 1;
    min-height: 0;
    display: flex;
    position: relative;
    background: #fbfcff;
}
.sidebar {
    width: 256px;
    flex: none;
    background: #fbfcff;
    padding: 24px 20px 0 19px;
}
.brand {
    display: flex;
    align-items: center;
    gap: 12px;
    padding-left: 5px;
    margin-bottom: 31px;
}
.brand-icon {
    width: 40px;
    height: 40px;
    border-radius: 12px;
    background: linear-gradient(90deg, #3380ff, #5a18ea);
    box-shadow: 0 8px 16px rgba(60, 70, 200, .18);
    display: flex;
    align-items: center;
    justify-content: center;
}
.brand-name {
    font-size: 24px;
    font-weight: 600;
    color: #1f2937;
    margin-top: -2px;
}
.side-nav {
    display: flex;
    flex-direction: column;
}
.nav-item {
    height: 44px;
    display: flex;
    align-items: center;
    gap: 12px;
    padding-left: 21px;
    font-size: 14px;
    letter-spacing: .1px;
    font-weight: 500;
    color: #374151;
    text-decoration: none;
}
.nav-item.active {
    height: 46px;
    padding-left: 17px;
    gap: 13.500px;
    border-radius: 16px;
    font-size: 14.800px;
    color: #fff;
    background: linear-gradient(90deg, #3380ff, #5a18ea);
    box-shadow: 0 6px 14px rgba(60, 70, 200, .22);
}

.main {
    flex: 1;
    min-width: 0;
    height: 100%;
    overflow: hidden;
    padding: 34px 32px 0 33px;
    background:
        linear-gradient(#f8f9fe 0 11px, transparent 11px),
        linear-gradient(180deg, #edf0fb 0%, #e8ecfb 35%, #eae6f7 65%, #edeefb 100%);
    display: flex;
    flex-direction: column;
    gap: 32px;
}
.card {
    flex: none;
    background: #fcfcfe;
    border-radius: 24px;
    box-shadow: 0 8px 20px rgba(70, 80, 130, .2);
}
.page-header {
    height: 82px;
    display: flex;
    align-items: center;
    gap: 16px;
    padding-left: 17px;
}
.icon-box {
    width: 32px;
    height: 32px;
    flex: none;
    border-radius: 8px;
    display: flex;
    align-items: center;
    justify-content: center;
    box-shadow: 0 4px 8px rgba(60, 70, 160, .2);
}
.icon-box.blue {
    background: linear-gradient(90deg, #3380ff, #5a18ea);
}
.icon-box.pink {
    background: linear-gradient(90deg, #bf12ea, #ea0080);
}
h1 {
    margin: 1px 0 1px;
    font-size: 24px;
    font-weight: 700;
    line-height: 30px;
    color: #111827;
}
.page-sub {
    margin: 0;
    font-size: 12px;
    line-height: 16px;
    color: #6b7280;
}
.settings-card {
    padding: 25px 25px 0 24.500px;
}
.settings-card:nth-of-type(2) {
    height: 276px;
}
.card-head {
    display: flex;
    align-items: center;
    gap: 12px;
}
h2 {
    margin: 0;
    font-size: 11.700px;
    font-weight: 400;
    color: #1f2937;
}
.card-sub {
    margin: 6px 0 0;
    font-size: 12px;
    line-height: 16px;
    color: #6b7280;
}
.field-label {
    display: block;
    margin-top: 19px;
    font-size: 14px;
    line-height: 20px;
    font-weight: 500;
    color: #111827;
}
.key-row {
    display: flex;
    align-items: center;
    gap: 8px;
    margin-top: 14px;
}
.text-input {
    flex: 1;
    height: 38px;
    line-height: 38px;
    padding-left: 12px;
    border: 1px solid #f6f7fa;
    border-radius: 6px;
    background: #fff;
    font-size: 14px;
    color: #1f2937;
}
.status-badge {
    width: 95px;
    height: 22px;
    border: 1px solid #e3e9f2;
    border-radius: 11px;
    display: flex;
    align-items: center;
    gap: 4px;
    padding: 0 0 1px 10px;
    font-size: 12px;
    font-weight: 600;
    color: #1f2937;
}
.status-badge i {
    width: 8px;
    height: 8px;
    border-radius: 50%;
    background: #9ca3af;
}
.btn-row {
    display: flex;
    gap: 8.500px;
    margin-top: 12.500px;
}
.btn {
    height: 36px;
    border-radius: 6px;
    font-family: inherit;
    font-size: 14px;
    font-weight: 500;
    padding: 0;
}
.btn-ghost {
    width: 134.500px;
    background: #fff;
    border: 1px solid #f6f6fa;
    color: #9a9ea6;
}
.btn-save {
    width: 112px;
    background: #80caff;
    border: 0;
    color: #eaf6ff;
}
.help {
    margin: 12px 0 0;
    font-size: 14px;
    line-height: 20px;
    color: #1f2430;
}
.help a {
    color: #0d9bf5;
    text-decoration: none;
}
.setting-row {
    display: flex;
    justify-content: space-between;
    align-items: center;
    padding: 18px 0 11px;
    border-top: 1px solid #e6eaf0;
}
.setting-row.first {
    border-top: 0;
    padding: 18px 0 16px;
}
.setting-name {
    font-size: 14px;
    line-height: 21px;
    font-weight: 500;
    color: #111827;
}
.setting-desc {
    font-size: 14px;
    line-height: 21px;
    color: #1f2430;
}
.toggle {
    width: 44px;
    height: 24px;
    margin-top: -2px;
    border-radius: 12px;
    background: #0a9bff;
    display: flex;
    align-items: center;
    justify-content: flex-end;
    padding-right: 2px;
    box-shadow: 0 6px 10px rgba(60, 70, 160, .12);
}
.toggle i {
    width: 20px;
    height: 20px;
    border-radius: 50%;
    background: #fff;
}
.number-input {
    width: 79px;
    height: 38px;
    line-height: 38px;
    margin-top: -3px;
    padding-left: 11px;
    border: 1px solid #f6f7fa;
    border-radius: 6px;
    background: #fff;
    font-size: 14px;
    color: #1f2937;
}

.scrollbar {
    width: 15px;
    flex: none;
    background: #2b2b2b;
    padding: 27px 3px 0 4px;
}
.scrollbar i {
    height: 303px;
    border-radius: 4px;
    background: #6b6b6b;
}
.bottom-fade {
    position: absolute;
    left: 0;
    right: 15px;
    bottom: 0;
    height: 20px;
    background: linear-gradient(180deg, rgba(225, 225, 228, 0), rgba(225, 225, 228, .85));
    pointer-events: none;
}

/* dock */
.dock {
    position: absolute;
    left: 49px;
    top: 826px;
    width: 1342px;
    height: 68px;
    border-radius: 18px;
    border: 1px solid #4a4a4e;
    background: linear-gradient(90deg, #1c1e26 0%, #1b1c22 70%, #2f2626 100%);
    display: flex;
    gap: 14.300px;
    padding: 9px 0 0 9.500px;
}
.app {
    width: 44px;
    height: 44px;
    flex: none;
    position: relative;
    display: block;
}
.app svg {
    width: 44px;
    height: 44px;
    overflow: visible;
}
.app.dot::after {
    content: "";
    position: absolute;
    left: 20px;
    top: 52px;
    width: 4px;
    height: 4px;
    border-radius: 50%;
    background: #8d8d8d;
}
.dock-sep {
    width: 1px;
    height: 52px;
    margin: 0 5.500px;
    flex: none;
    background: #55565a;
}
.fz-text {
    font-family: "Liberation Sans", sans-serif;
    font-weight: 700;
    font-style: italic;
    font-size: 40px;
    text-anchor: middle;
    fill: #fff;
}
.calendar {
    background: #f5f4f1;
    border-radius: 10px;
    overflow: hidden;
    text-align: center;
}
.cal-month {
    display: block;
    height: 13px;
    line-height: 13px;
    background: #f44336;
    color: #fff;
    font-size: 9px;
    font-weight: 600;
}
.cal-day {
    display: block;
    font-size: 26px;
    line-height: 30px;
    font-weight: 300;
    color: #2a2a2a;
}
.badge {
    position: absolute;
    right: -7px;
    top: -7px;
    width: 20px;
    height: 20px;
    border-radius: 50%;
    background: #e8140c;
    color: #fff;
    font-size: 11px;
    font-weight: 600;
    line-height: 20px;
    text-align: center;
}
```
